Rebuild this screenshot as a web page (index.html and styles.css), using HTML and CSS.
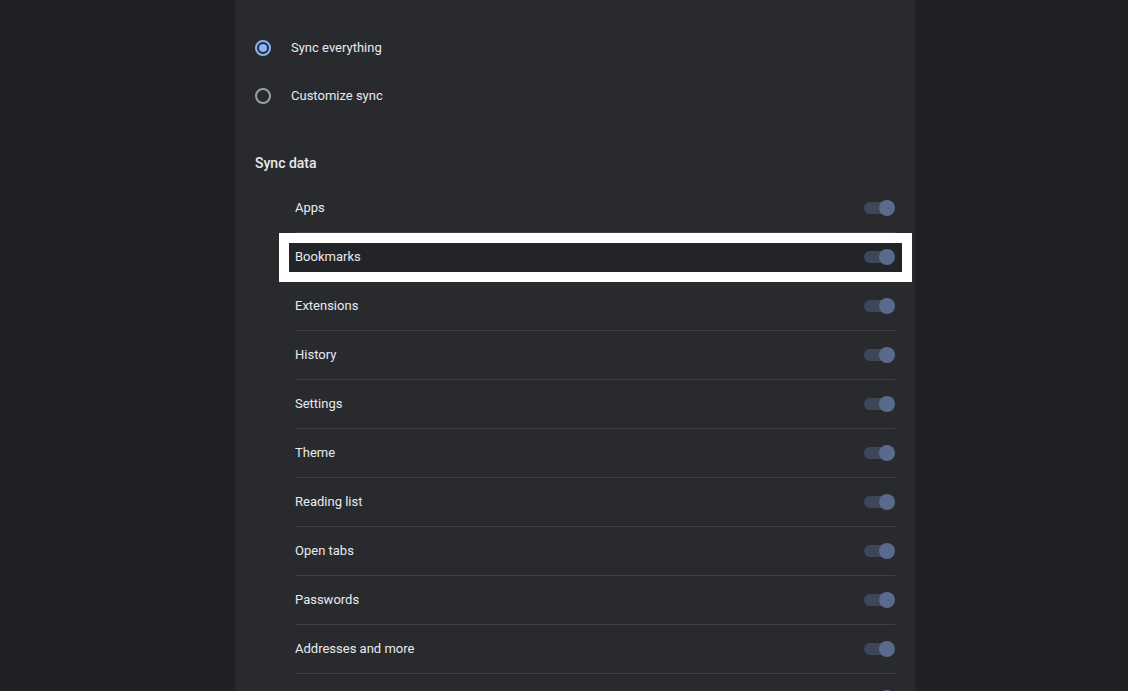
FILE: index.html
```html
<!DOCTYPE html>
<html>
<head>
<meta charset="utf-8">
<link rel="stylesheet" href="styles.css">
</head>
<body>
<div class="page">
  <div class="card">
    <div class="radio-row">
      <span class="radio checked"></span>
      <span class="radio-label">Sync everything</span>
    </div>
    <div class="radio-row">
      <span class="radio"></span>
      <span class="radio-label">Customize sync</span>
    </div>
    <div class="heading">Sync data</div>
    <div class="list">
      <div class="row"><span class="label">Apps</span><span class="toggle"><span class="track"></span><span class="knob"></span></span></div>
      <div class="row highlighted"><span class="frame"></span><span class="label">Bookmarks</span><span class="toggle"><span class="track"></span><span class="knob"></span></span></div>
      <div class="row"><span class="label">Extensions</span><span class="toggle"><span class="track"></span><span class="knob"></span></span></div>
      <div class="row"><span class="label">History</span><span class="toggle"><span class="track"></span><span class="knob"></span></span></div>
      <div class="row"><span class="label">Settings</span><span class="toggle"><span class="track"></span><span class="knob"></span></span></div>
      <div class="row"><span class="label">Theme</span><span class="toggle"><span class="track"></span><span class="knob"></span></span></div>
      <div class="row"><span class="label">Reading list</span><span class="toggle"><span class="track"></span><span class="knob"></span></span></div>
      <div class="row"><span class="label">Open tabs</span><span class="toggle"><span class="track"></span><span class="knob"></span></span></div>
      <div class="row"><span class="label">Passwords</span><span class="toggle"><span class="track"></span><span class="knob"></span></span></div>
      <div class="row"><span class="label">Addresses and more</span><span class="toggle"><span class="track"></span><span class="knob"></span></span></div>
      <div class="row"><span class="label">Payment methods</span><span class="toggle"><span class="track"></span><span class="knob"></span></span></div>
    </div>
  </div>
</div>
</body>
</html>
```
FILE: styles.css
```css
html, body {
  margin: 0;
  padding: 0;
  height: 100%;
  overflow: hidden;
  background: #202124;
}
body {
  font-family: Roboto, "Liberation Sans", sans-serif;
  font-size: 13px;
  color: #e8eaed;
}
.page {
  padding-left: 235px;
}
.card {
  width: 680px;
  background: #292a2d;
  padding-top: 24px;
  min-height: 800px;
  box-sizing: border-box;
}
.radio-row {
  display: flex;
  align-items: center;
  height: 48px;
  padding-left: 20px;
  gap: 20px;
}
.radio {
  width: 16px;
  height: 16px;
  box-sizing: border-box;
  border: 2px solid #9aa0a6;
  border-radius: 50%;
  display: flex;
  align-items: center;
  justify-content: center;
}
.radio.checked {
  border-color: #8ab4f8;
}
.radio.checked::after {
  content: "";
  width: 8px;
  height: 8px;
  border-radius: 50%;
  background: #8ab4f8;
}
.radio-label {
  line-height: 20px;
}
.heading {
  padding: 33px 0 11px 20px;
  line-height: 20px;
  font-size: 14px;
  font-weight: 500;
}
.list {
  padding: 0 20px 0 60px;
}
.row {
  position: relative;
  display: flex;
  align-items: center;
  justify-content: space-between;
  height: 48px;
  border-top: 1px solid #3f4043;
}
.row:first-child {
  border-top: none;
}
.row.highlighted {
  z-index: 2;
}
.label {
  position: relative;
  line-height: 20px;
}
.frame {
  position: absolute;
  left: -16px;
  right: -17px;
  top: 0;
  height: 49px;
  box-sizing: border-box;
  border: 10px solid #ffffff;
  background: #232427;
}
.toggle {
  position: relative;
  width: 31px;
  height: 16px;
}
.track {
  position: absolute;
  left: 0;
  top: 2px;
  width: 28px;
  height: 12px;
  border-radius: 6px;
  background: #3e475a;
}
.knob {
  position: absolute;
  right: 0;
  top: 0;
  width: 16px;
  height: 16px;
  border-radius: 50%;
  background: #5a6a8d;
}
```
